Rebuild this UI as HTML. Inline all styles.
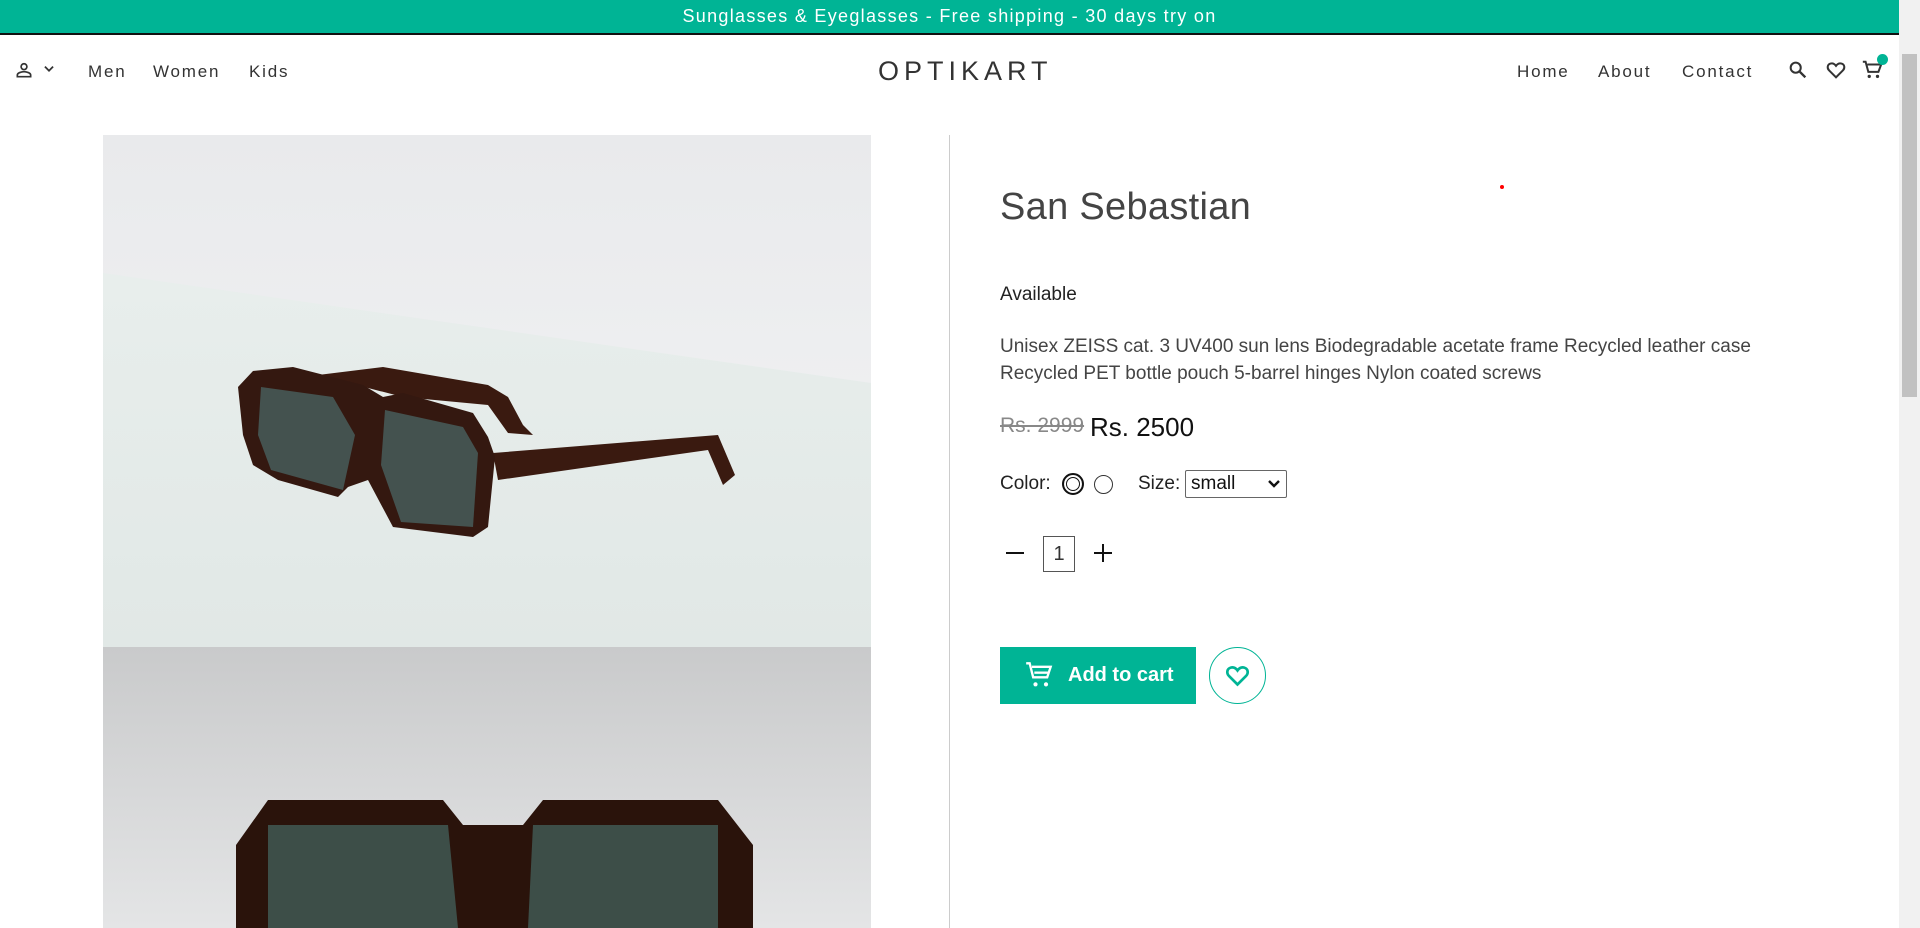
<!DOCTYPE html>
<html><head><meta charset="utf-8"><style>
*{margin:0;padding:0;box-sizing:border-box}
html,body{width:1920px;height:928px;overflow:hidden;background:#fff;font-family:"Liberation Sans",sans-serif;color:#222}
.top{position:absolute;left:0;top:0;width:1899px;height:35px;background:#00b495;border-bottom:2px solid #111;color:#fff;text-align:center;font-size:18px;letter-spacing:1.3px;line-height:33px}
.nav{position:absolute;top:62px;font-size:17px;letter-spacing:1.8px;color:#333}
.logo{position:absolute;left:878px;top:56px;font-size:27px;letter-spacing:5px;color:#333}
.sb{position:absolute;right:0;top:0;width:21px;height:928px;background:#f1f1f1}
.sb div{position:absolute;left:3px;top:54px;width:15px;height:343px;background:#c1c1c1}
.vl{position:absolute;left:949px;top:135px;width:1px;height:793px;background:#ccc}
.r{position:absolute;left:1000px}
</style></head><body>
<div class="top">Sunglasses &amp; Eyeglasses - Free shipping - 30 days try on</div>
<svg style="position:absolute;left:14px;top:60px" width="20" height="20" viewBox="0 0 24 24"><circle cx="12" cy="8" r="3.5" fill="none" stroke="#333" stroke-width="2"/><path d="M4 20v-2c0-2.5 5-4 8-4s8 1.5 8 4v2z" fill="none" stroke="#333" stroke-width="2"/></svg>
<svg style="position:absolute;left:42px;top:62px" width="14" height="14" viewBox="0 0 24 24"><path d="M5 8l7 7 7-7" fill="none" stroke="#333" stroke-width="3"/></svg>
<div class="nav" style="left:88px">Men</div>
<div class="nav" style="left:153px">Women</div>
<div class="nav" style="left:249px">Kids</div>
<div class="logo">OPTIKART</div>
<div class="nav" style="left:1517px">Home</div>
<div class="nav" style="left:1598px">About</div>
<div class="nav" style="left:1682px">Contact</div>
<svg style="position:absolute;left:1787px;top:59px" width="22" height="22" viewBox="0 0 24 24"><circle cx="9.5" cy="9.5" r="5.5" fill="none" stroke="#333" stroke-width="2.2"/><path d="M14 14l6 6" stroke="#333" stroke-width="2.6"/></svg>
<svg style="position:absolute;left:1824px;top:59px" width="24" height="22" viewBox="0 0 24 24"><path d="M12 20l-7.5-7.5C2 10 2.5 6 6 5c2.5-.7 4.5.5 6 2.5C13.5 5.5 15.5 4.3 18 5c3.5 1 4 5 1.5 7.5z" fill="none" stroke="#333" stroke-width="2.2"/></svg>
<svg style="position:absolute;left:1861px;top:59px" width="22" height="22" viewBox="0 0 24 24"><path d="M2 3h3l3 11h11l3-8H7" fill="none" stroke="#333" stroke-width="2.2"/><circle cx="9" cy="19" r="1.8" fill="#333"/><circle cx="18" cy="19" r="1.8" fill="#333"/></svg>
<div style="position:absolute;left:1877px;top:54px;width:11px;height:11px;border-radius:50%;background:#00b495"></div>
<div class="sb"><div></div></div>
<svg style="position:absolute;left:103px;top:135px" width="768" height="793" viewBox="0 0 768 793">
<defs><linearGradient id="g1" x1="0" y1="0" x2="0" y2="1"><stop offset="0" stop-color="#e9eaec"/><stop offset="1" stop-color="#f3f4f5"/></linearGradient>
<linearGradient id="g2" x1="0" y1="0" x2="0" y2="1"><stop offset="0" stop-color="#e8eeec"/><stop offset="1" stop-color="#e1e8e6"/></linearGradient>
<linearGradient id="g3" x1="0" y1="0" x2="0" y2="1"><stop offset="0" stop-color="#c9cacb"/><stop offset="1" stop-color="#e4e5e6"/></linearGradient></defs>
<rect width="768" height="512" fill="url(#g1)"/>
<path d="M0 138L768 248V512H0z" fill="url(#g2)"/>
<path d="M215 240L280 232 385 250 405 262 420 290 430 300 405 298 385 270 300 262z" fill="#3a1a10"/>
<path d="M390 318L615 300 632 340 620 350 605 315 395 345z" fill="#3a1a10"/>
<path d="M135 252L150 236 190 232 260 250 280 262 300 258 370 278 385 302 392 322 385 392 370 402 290 392 265 345 245 352 235 362 175 345 150 330 140 300z" fill="#341810"/>
<path d="M158 252L230 262 252 300 240 355 168 335 155 300z" fill="#44524f"/>
<path d="M282 275L360 292 375 318 370 392 298 387 278 330z" fill="#44524f"/>
<rect y="512" width="768" height="281" fill="url(#g3)"/>
<path d="M133 710L165 665 340 665 360 690 420 690 440 665 615 665 650 710 650 793H133z" fill="#2a130b"/>
<path d="M165 690L345 690 355 793H165z" fill="#3d4e48"/>
<path d="M430 690L615 690 615 793H425z" fill="#3d4e48"/>
</svg>
<div class="vl"></div>
<div style="position:absolute;left:1500px;top:185px;width:4px;height:4px;background:red;border-radius:50%"></div>
<div class="r" style="top:186px;font-size:38px;color:#444;letter-spacing:.3px">San Sebastian</div>
<div class="r" style="top:284px;font-size:19px;color:#222">Available</div>
<div class="r" style="top:333px;font-size:19px;line-height:27px;color:#444;width:790px">Unisex ZEISS cat. 3 UV400 sun lens Biodegradable acetate frame Recycled leather case Recycled PET bottle pouch 5-barrel hinges Nylon coated screws</div>
<div class="r" style="top:414px;font-size:21px;color:#888;text-decoration:line-through">Rs. 2999</div>
<div class="r" style="left:1090px;top:412px;font-size:26px;color:#111">Rs. 2500</div>
<div class="r" style="top:473px;font-size:19px;color:#222">Color:</div>
<div style="position:absolute;left:1062px;top:473px;width:22px;height:22px;border-radius:50%;border:2px solid #111;box-shadow:inset 0 0 0 2px #fff,inset 0 0 0 3px #111"></div>
<div style="position:absolute;left:1094px;top:475px;width:19px;height:19px;border-radius:50%;border:1px solid #333"></div>
<div class="r" style="left:1138px;top:473px;font-size:19px;color:#222">Size:</div>
<div style="position:absolute;left:1185px;top:470px;width:102px;height:28px;border:1px solid #666;border-radius:2px;font-size:19px;padding:2px 5px;color:#111">small<svg style="position:absolute;right:6px;top:8px" width="12" height="10" viewBox="0 0 12 10"><path d="M1 2l5 5 5-5" fill="none" stroke="#111" stroke-width="2.4"/></svg></div>
<div style="position:absolute;left:1006px;top:552px;width:18px;height:2px;background:#111"></div>
<div style="position:absolute;left:1043px;top:536px;width:32px;height:36px;border:1px solid #555;font-size:20px;text-align:center;line-height:34px;color:#333">1</div>
<div style="position:absolute;left:1094px;top:552px;width:18px;height:2px;background:#111"></div>
<div style="position:absolute;left:1102px;top:544px;width:2px;height:18px;background:#111"></div>
<div style="position:absolute;left:1000px;top:647px;width:196px;height:57px;background:#00b495;color:#fff;font-size:20px;font-weight:bold;line-height:57px;padding-left:68px">Add to cart</div>
<svg style="position:absolute;left:1025px;top:661px" width="28" height="28" viewBox="0 0 24 24"><path d="M1 2h3l3 12h12l3-9H6" fill="none" stroke="#fff" stroke-width="2"/><path d="M8 10h12" stroke="#fff" stroke-width="2"/><circle cx="9" cy="20" r="1.8" fill="#fff"/><circle cx="18" cy="20" r="1.8" fill="#fff"/></svg>
<div style="position:absolute;left:1209px;top:647px;width:57px;height:57px;border-radius:50%;border:1px solid #00b495"></div>
<svg style="position:absolute;left:1223px;top:662px" width="29" height="27" viewBox="0 0 24 24"><path d="M12 20l-7.5-7.5C2 10 2.5 6 6 5c2.5-.7 4.5.5 6 2.5C13.5 5.5 15.5 4.3 18 5c3.5 1 4 5 1.5 7.5z" fill="none" stroke="#00b495" stroke-width="2.4"/></svg>
</body></html>
